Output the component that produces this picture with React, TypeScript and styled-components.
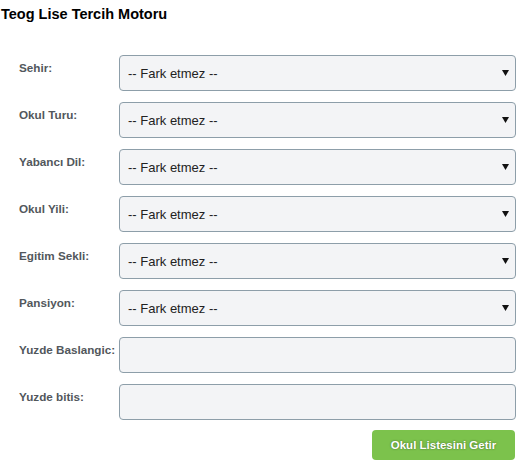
import React from "react";
import styled, { createGlobalStyle } from "styled-components";

const Global = createGlobalStyle`
  html, body { margin: 0; padding: 0; background: #fff; }
  body { font-family: "Liberation Sans", Arial, sans-serif; }
`;

const Page = styled.div`
  width: 523px;
  padding: 5px 0 0 1px;
  box-sizing: border-box;
`;

const Title = styled.h1`
  margin: 0;
  font-size: 14.5px;
  font-weight: bold;
  color: #000;
  line-height: 18px;
`;

const Form = styled.form`
  margin-top: 32px;
  padding: 0 7px 0 18px;
  display: flex;
  flex-direction: column;
  gap: 11px;
`;

const Row = styled.div`
  display: flex;
  align-items: flex-start;
`;

const Label = styled.label`
  width: 100px;
  flex: none;
  padding-top: 5px;
  font-size: 11.7px;
  font-weight: bold;
  color: #52575c;
  line-height: 15px;
  white-space: nowrap;
`;

const Field = styled.div`
  position: relative;
  flex: 1;
`;

const Select = styled.select`
  appearance: none;
  -webkit-appearance: none;
  width: 100%;
  height: 36px;
  box-sizing: border-box;
  border: 1px solid #8d9ea9;
  border-radius: 4px;
  background: #f3f4f6;
  padding: 0 24px 0 8px;
  font-family: "Liberation Sans", Arial, sans-serif;
  font-size: 13px;
  color: #222;
  outline: none;
`;

const Input = styled.input`
  width: 100%;
  height: 36px;
  box-sizing: border-box;
  border: 1px solid #8d9ea9;
  border-radius: 4px;
  background: #f3f4f6;
  padding: 0 8px;
  font-family: "Liberation Sans", Arial, sans-serif;
  font-size: 13px;
  outline: none;
  display: block;
`;

const Arrow = styled.svg`
  position: absolute;
  right: 7px;
  top: 15px;
  pointer-events: none;
`;

const Actions = styled.div`
  display: flex;
  justify-content: flex-end;
  padding-right: 1px;
`;

const Button = styled.button`
  width: 143px;
  height: 30px;
  border: none;
  border-radius: 4px;
  background: #7cc24c;
  color: #fff;
  font-family: "Liberation Sans", Arial, sans-serif;
  font-size: 11.5px;
  font-weight: bold;
  text-shadow: 0 0 2px rgba(50, 80, 30, 0.8);
  cursor: pointer;
  margin-top: -1px;
`;

const selects = ["Sehir:", "Okul Turu:", "Yabancı Dil:", "Okul Yili:", "Egitim Sekli:", "Pansiyon:"];
const inputs = ["Yuzde Baslangic:", "Yuzde bitis:"];

export default function App() {
  return (
    <>
      <Global />
      <Page>
        <Title>Teog Lise Tercih Motoru</Title>
        <Form onSubmit={(e) => e.preventDefault()}>
          {selects.map((l) => (
            <Row key={l}>
              <Label>{l}</Label>
              <Field>
                <Select defaultValue="">
                  <option value="">-- Fark etmez --</option>
                </Select>
                <Arrow width="7" height="6" viewBox="0 0 7 6">
                  <path d="M0 0 H7 L3.5 6 Z" fill="#111" />
                </Arrow>
              </Field>
            </Row>
          ))}
          {inputs.map((l) => (
            <Row key={l}>
              <Label>{l}</Label>
              <Field>
                <Input type="text" />
              </Field>
            </Row>
          ))}
          <Actions>
            <Button type="submit">Okul Listesini Getir</Button>
          </Actions>
        </Form>
      </Page>
    </>
  );
}
